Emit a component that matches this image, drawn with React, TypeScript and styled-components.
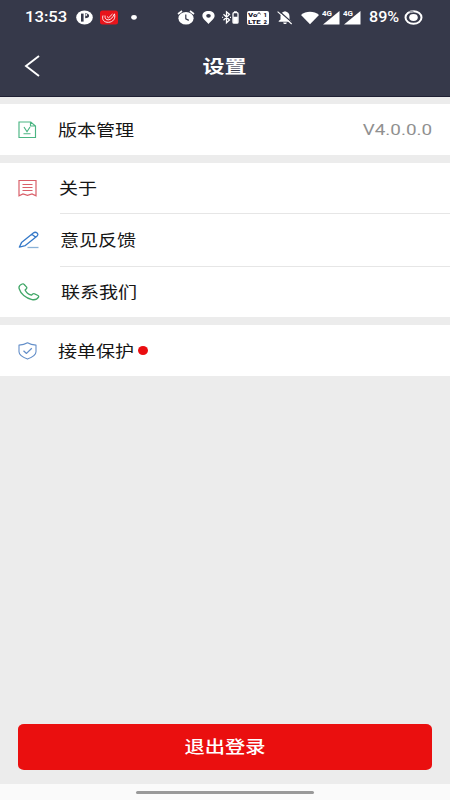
import React from "react";
import styled, { createGlobalStyle } from "styled-components";

const GlobalStyle = createGlobalStyle`
  * { box-sizing: border-box; }
  body {
    margin: 0;
    font-family: Roboto, "Noto Sans CJK SC", sans-serif;
  }
`;

const Screen = styled.div`
  display: flex;
  flex-direction: column;
  width: 450px;
  height: 800px;
  overflow: hidden;
  background: #ececec;
`;

const Header = styled.header`
  height: 97px;
  flex: none;
  background: #36394a;
  border-bottom: 1px solid #1f2033;
  color: #fff;
`;

const StatusBar = styled.div`
  display: flex;
  align-items: center;
  height: 35px;
  padding-left: 25px;
`;

const Slot = styled.span<{ $w: number; $gap: number }>`
  display: flex;
  flex: none;
  align-items: center;
  width: ${(p) => p.$w}px;
  margin-left: ${(p) => p.$gap}px;
  > svg { display: block; width: 100%; height: 17px; }
`;

const WideText = styled.span<{ $size: number; $weight?: number; $scale?: number; $origin?: string }>`
  display: inline-block;
  white-space: nowrap;
  font-size: ${(p) => p.$size}px;
  font-weight: ${(p) => p.$weight ?? 400};
  line-height: 1.3;
  transform: scaleX(${(p) => p.$scale ?? 1.19});
  transform-origin: ${(p) => p.$origin ?? "left"} center;
`;

const TitleBar = styled.div`
  display: grid;
  grid-template-columns: 60px 1fr 60px;
  align-items: center;
  height: 62px;
`;

const BackButton = styled.button`
  display: flex;
  padding: 0 0 0 24px;
  border: 0;
  background: none;
  color: inherit;
`;

const Title = styled.h1`
  display: flex;
  justify-content: center;
  margin: 0;
  padding-top: 3px;
  font-size: 18.5px;
  line-height: 1;
`;

const Group = styled.section`
  flex: none;
  margin-top: 8px;
  background: #fff;
  &:first-of-type { margin-top: 7px; }
`;

const Row = styled.div<{ $h: number }>`
  display: flex;
  align-items: center;
  height: ${(p) => p.$h}px;
  padding: 0 18px;
  color: #161616;
`;

const RowIcon = styled.span`
  display: flex;
  flex: none;
  width: 22px;
`;

const Label = styled.span<{ $gap: number; $w: number; $drop: number }>`
  display: flex;
  flex: none;
  width: ${(p) => p.$w}px;
  margin-left: ${(p) => p.$gap}px;
  padding-top: ${(p) => p.$drop}px;
`;

const Divider = styled.div`
  height: 1px;
  margin-left: 60px;
  background: #e6e6e6;
`;

const Version = styled.span`
  display: flex;
  margin-left: auto;
  padding-top: 3px;
  color: #909090;
`;

const RedDot = styled.span`
  width: 10px;
  height: 9px;
  margin-left: 4px;
  border-radius: 50%;
  background: #ea0d10;
`;

const LogoutButton = styled.button`
  flex: none;
  height: 46px;
  margin: auto 18px 14px;
  padding: 0;
  border: 0;
  border-radius: 6px / 5px;
  background: #ea0f0f;
  color: #fff;
  font-family: inherit;
`;

const GestureBar = styled.footer`
  display: flex;
  flex: none;
  justify-content: center;
  height: 16px;
  padding-top: 7px;
  background: #fafafa;
`;

const Handle = styled.span`
  width: 178px;
  height: 3px;
  border-radius: 2px;
  background: #999;
`;

const VolteBadge = styled.span`
  display: flex;
  flex-direction: column;
  width: 22px;
  height: 14px;
  padding: 0 2px 0 1px;
  border-radius: 2px;
  background: #fff;
  color: #1d2030;
`;

const VolteLine = styled.span`
  display: flex;
  justify-content: space-between;
  height: 7px;
  font-size: 6px;
  font-weight: 900;
  line-height: 7px;
`;

const VolteWord = styled.span`
  transform: scaleX(1.3);
  transform-origin: left center;
`;

const ParkIcon = () => (
  <svg viewBox="0 0 17 17" preserveAspectRatio="none">
    <ellipse cx="8.5" cy="8.5" rx="8.3" ry="7" fill="#fff" />
    <path d="M5 4.600h2.600v8H5z" fill="#36394a" />
    <path d="M9.200 4.200c2.600 0 3.900 1 3.900 2.500S11.800 9.200 9.200 9.200z" fill="#36394a" />
    <circle cx="10.300" cy="5.900" r=".9" fill="#fff" />
  </svg>
);

const AppBadge = () => (
  <svg viewBox="0 0 18 17" preserveAspectRatio="none">
    <rect y="1.5" width="18" height="14" rx="2.5" fill="#e8141b" />
    <path d="M3 6.5C1.500 11 4.500 13.500 8.500 13.300c4.500-.2 7.300-3.600 6-8.300M5 6.500c-.3 2.700 1 4.600 3.500 4.300 2.500-.2 4.300-2.300 6-6.100M7 7.500l1.600 1.300L12.500 5" fill="none" stroke="#fff" strokeWidth=".9" />
  </svg>
);

const DotIcon = () => (
  <svg viewBox="0 0 6 17"><ellipse cx="3" cy="8.3" rx="2.8" ry="2.4" fill="#fff" /></svg>
);

const AlarmIcon = () => (
  <svg viewBox="0 0 18 17" preserveAspectRatio="none">
    <ellipse cx="9" cy="9.3" rx="7.6" ry="6.3" fill="#fff" />
    <path d="M1 5l4-3M17 5l-4-3" stroke="#fff" strokeWidth="1.6" />
    <path d="M8.8 5.6v4.2l3 1.6" fill="none" stroke="#36394a" strokeWidth="1.2" />
  </svg>
);

const PinIcon = () => (
  <svg viewBox="0 0 13 17" preserveAspectRatio="none">
    <path d="M6.5 2C2.8 2 .4 4 .4 6.8c0 3.2 4 5.5 6.1 8.2 2.1-2.7 6.1-5 6.1-8.2C12.600 4 10.200 2 6.500 2z" fill="#fff" />
    <ellipse cx="6.5" cy="6.8" rx="2.3" ry="1.9" fill="#36394a" />
  </svg>
);

const BluetoothIcon = () => (
  <svg viewBox="0 0 17 17" preserveAspectRatio="none">
    <path d="M1.500 5.300l6 5.800-3 2.700V2.800l3 2.600-6 5.800M.2 8.300h.9M8 8.300h1" fill="none" stroke="#fff" strokeWidth="1.300" />
    <rect x="11" y="3.700" width="5" height="10.500" rx="1" fill="none" stroke="#fff" strokeWidth="1.300" />
    <path d="M12 2.200h2.900v1.500H12zM11.200 7.700h4.600v6.200h-4.600z" fill="#fff" />
  </svg>
);

const VolteWave = () => (
  <svg width="4" height="5" viewBox="0 0 4 5" fill="none" stroke="#1d2030" strokeWidth=".9">
    <path d="M.3 3.500L2 1.500l1.700 2" />
  </svg>
);

const MutedBellIcon = () => (
  <svg viewBox="0 0 16 17" preserveAspectRatio="none">
    <path d="M8 2.200c-3 .8-4.500 2.300-4.500 5.200v3L1.700 12v.8h12.600V12l-1.800-1.600v-3C12.500 4.500 11 3 8 2.200zM6.200 13.500h3.600c0 2-3.600 2-3.600 0z" fill="#fff" />
    <path d="M1.700 1.800L15.600 14" stroke="#36394a" strokeWidth="1.300" />
    <path d="M.6 2.700L14.700 15" stroke="#fff" strokeWidth="1.100" />
  </svg>
);

const WifiIcon = () => (
  <svg viewBox="0 0 18 17" preserveAspectRatio="none">
    <path d="M0 6c4.800-4.300 13.200-4.300 18 0L9 15.200z" fill="#fff" />
  </svg>
);

const SignalIcon = () => (
  <svg viewBox="0 0 18 17" preserveAspectRatio="none">
    <path d="M17.500 2v13.500H1z" fill="#fff" />
    <text x="0" y="7.300" fontSize="6.800" textLength="10" lengthAdjust="spacingAndGlyphs" fontFamily="Roboto, sans-serif" fontWeight="700" fill="#fff" stroke="#36394a" strokeWidth="1.200" paintOrder="stroke">4G</text>
  </svg>
);

const BatteryIcon = () => (
  <svg viewBox="0 0 19 17" preserveAspectRatio="none">
    <ellipse cx="9.500" cy="8.500" rx="8" ry="6.300" fill="none" stroke="#fff" strokeWidth="2" />
    <ellipse cx="9.500" cy="8.500" rx="4.300" ry="3.400" fill="#fff" />
    <path d="M5.500 3.100Q7 2.200 9.500 2.200" fill="none" stroke="#9fa1aa" strokeWidth="2" />
  </svg>
);

const VersionIcon = () => (
  <svg width="20" height="18" viewBox="0 0 20 18" fill="none" stroke="#4bb583" strokeWidth="1.150">
    <path d="M1 1h11.800l4.700 4v11.500H1zM12.500 1v4h5M6 6l3 4.700L12 6M5.500 12.700h7" />
  </svg>
);

const AboutIcon = () => (
  <svg width="20" height="18" viewBox="0 0 20 18" fill="none" stroke="#d95f69" strokeWidth="1.200">
    <path d="M1 1.500h17v15.300l-4-1.800-4.500 1.300L5 15l-4 1.800zM4.500 5.500h10M4.500 8.500h10M4.500 11.500h10" />
  </svg>
);

const FeedbackIcon = () => (
  <svg width="22" height="18" viewBox="0 0 22 18" fill="none" stroke="#3579c8" strokeWidth="1.300" strokeLinejoin="round">
    <path d="M1.300 16.200l2.200-4.600L15.300 2c1.300-1 2.800-.8 3.800 0 1.100.9 1 2.200-.2 3.200L7.300 14.600zM13.800 3.200l3.900 3.100" />
    <path d="M9.500 16.500H20.500" stroke="#8bb2d8" />
  </svg>
);

const PhoneIcon = () => (
  <svg width="22" height="18" viewBox="0 0 22 18" fill="none" stroke="#42a768" strokeWidth="1.300" strokeLinejoin="round">
    <path d="M4.200 1C2 1.800.5 3.500 1.200 5.800 2.600 10.700 7.700 15.300 14 16.600c2.900.5 5.300-.4 6.500-2.400.4-.7.100-1.300-.5-1.700l-3.400-1.700c-.7-.4-1.300-.3-1.900.2l-1.300 1.200c-3-.9-5.300-2.800-6.300-5.200l1.300-1.300c.5-.5.5-1.100.2-1.600L6.200 1.500C5.800.9 5 .7 4.200 1z" />
  </svg>
);

const ShieldIcon = () => (
  <svg width="19" height="18" viewBox="0 0 19 18" fill="none" stroke="#648fc9" strokeWidth="1.100" strokeLinejoin="round">
    <path d="M9.500.8C7.300 2.200 4.600 3 1 3.100v6.700c0 3 3.500 5.400 8.500 7.300 5-1.900 8.500-4.300 8.500-7.300V3.100C14.400 3 11.700 2.200 9.500.8z" />
    <path d="M5.500 8.800l3 2.600L13.800 6.300" strokeWidth="1.300" />
  </svg>
);

interface ItemProps {
  icon: React.ReactNode;
  text: string;
  height: number;
  gap?: number;
  drop?: number;
  children?: React.ReactNode;
}

const Item = ({ icon, text, height, gap = 18, drop = 2, children }: ItemProps) => (
  <Row $h={height}>
    <RowIcon>{icon}</RowIcon>
    <Label $gap={gap} $w={text.length * 19} $drop={drop}>
      <WideText $size={16}>{text}</WideText>
    </Label>
    {children}
  </Row>
);

export default function App() {
  return (
    <Screen>
      <GlobalStyle />
      <Header>
        <StatusBar>
          <Slot $w={42} $gap={0}><WideText $size={14} $weight={500}>13:53</WideText></Slot>
          <Slot $w={17} $gap={9}><ParkIcon /></Slot>
          <Slot $w={18} $gap={7}><AppBadge /></Slot>
          <Slot $w={6} $gap={13}><DotIcon /></Slot>
          <Slot $w={18} $gap={40}><AlarmIcon /></Slot>
          <Slot $w={13} $gap={7}><PinIcon /></Slot>
          <Slot $w={17} $gap={7}><BluetoothIcon /></Slot>
          <Slot $w={22} $gap={8}>
            <VolteBadge>
              <VolteLine><VolteWord>Vo</VolteWord><VolteWave /><span>1</span></VolteLine>
              <VolteLine><VolteWord>LTE</VolteWord><span>2</span></VolteLine>
            </VolteBadge>
          </Slot>
          <Slot $w={16} $gap={8}><MutedBellIcon /></Slot>
          <Slot $w={18} $gap={8}><WifiIcon /></Slot>
          <Slot $w={18} $gap={3}><SignalIcon /></Slot>
          <Slot $w={18} $gap={3}><SignalIcon /></Slot>
          <Slot $w={31} $gap={8}><WideText $size={14} $weight={500} $scale={1.15}>89%</WideText></Slot>
          <Slot $w={19} $gap={4}><BatteryIcon /></Slot>
        </StatusBar>
        <TitleBar>
          <BackButton aria-label="返回">
            <svg width="17" height="22" viewBox="0 0 17 22" fill="none" stroke="#fff" strokeWidth="1.900">
              <path d="M15 1L2 11l13 10" />
            </svg>
          </BackButton>
          <Title><WideText $size={18.5} $weight={600} $origin="center">设置</WideText></Title>
        </TitleBar>
      </Header>

      <Group>
        <Item icon={<VersionIcon />} text="版本管理" height={51} drop={3}>
          <Version><WideText $size={15} $scale={1.26} $origin="right">V4.0.0.0</WideText></Version>
        </Item>
      </Group>

      <Group>
        <Item icon={<AboutIcon />} text="关于" height={50} gap={19} />
        <Divider />
        <Item icon={<FeedbackIcon />} text="意见反馈" height={52} gap={20} />
        <Divider />
        <Item icon={<PhoneIcon />} text="联系我们" height={50} gap={21} />
      </Group>

      <Group>
        <Item icon={<ShieldIcon />} text="接单保护" height={51} drop={3}>
          <RedDot />
        </Item>
      </Group>

      <LogoutButton>
        <WideText $size={17} $weight={500} $origin="center">退出登录</WideText>
      </LogoutButton>
      <GestureBar><Handle /></GestureBar>
    </Screen>
  );
}
